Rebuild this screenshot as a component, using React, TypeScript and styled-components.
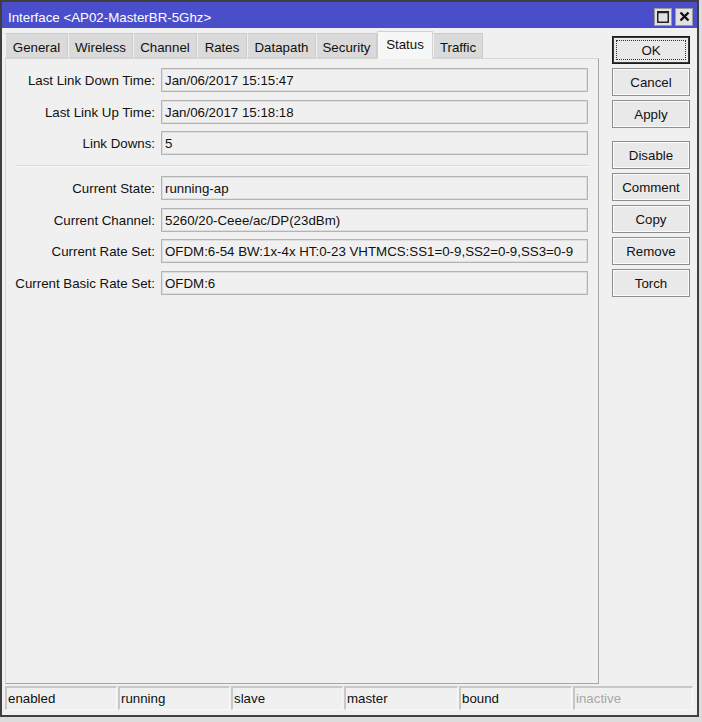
import React from "react";
import styled, { createGlobalStyle } from "styled-components";

const Global = createGlobalStyle`
  html, body { margin: 0; padding: 0; }
  body {
    background: #dcdcdc;
    font-family: "Liberation Sans", Arial, sans-serif;
    font-size: 13.3px;
    color: #111;
  }
`;

const Window = styled.div`
  box-sizing: border-box;
  width: 699px;
  height: 717px;
  border: 2px solid #3f3f3f;
  background: #f0f0f0;
  display: flex;
  flex-direction: column;
`;

const TitleBar = styled.div`
  height: 26px;
  background: #4b4ecb;
  display: flex;
  align-items: center;
  padding: 0 4px 0 6px;
  color: #fff;
`;

const Title = styled.div`
  flex: 1;
  font-size: 13.3px;
  padding-top: 4px;
`;

const TitleButtons = styled.div`
  display: flex;
  gap: 3px;
  padding-top: 3px;
`;

const TitleButton = styled.div`
  width: 18px;
  height: 18px;
  box-sizing: border-box;
  background: #e2e2e2;
  border: 1px solid #9a9a9a;
  display: flex;
  align-items: center;
  justify-content: center;
`;

const Body = styled.div`
  flex: 1;
  display: flex;
  padding: 3px 6px 0 3px;
  gap: 13px;
  min-height: 0;
`;

const MainColumn = styled.div`
  width: 594px;
  display: flex;
  flex-direction: column;
`;

const TabRow = styled.div`
  display: flex;
  align-items: flex-end;
  height: 27px;
  position: relative;
  z-index: 1;
`;

const Tab = styled.div<{ $active?: boolean; $w: number }>`
  box-sizing: border-box;
  width: ${(p) => p.$w}px;
  height: ${(p) => (p.$active ? 28 : 25)}px;
  margin-bottom: ${(p) => (p.$active ? -1 : 0)}px;
  background: ${(p) => (p.$active ? "#f7f7f7" : "#dadada")};
  border: 1px solid ${(p) => (p.$active ? "#d2d2d2" : "#cbcbcb")};
  border-bottom: ${(p) => (p.$active ? "none" : "1px solid #d2d2d2")};
  border-left-color: ${(p) => (p.$active ? "#d2d2d2" : "#f2f2f2")};
  display: flex;
  align-items: ${(p) => (p.$active ? "flex-start" : "center")};
  padding-top: ${(p) => (p.$active ? 5 : 3)}px;
  justify-content: center;
  font-size: 13.3px;
  color: #111;
`;

const Panel = styled.div`
  flex: 1;
  box-sizing: border-box;
  background: #f0f0f0;
  border: 1px solid #d6d6d6;
  border-right-color: #a6a6a6;
  border-bottom-color: #a6a6a6;
  padding: 9px 0 0 8px;
`;

const FieldGrid = styled.div`
  display: grid;
  grid-template-columns: 141px 427px;
  column-gap: 6px;
  row-gap: 7.5px;
  align-items: center;
`;

const Label = styled.div`
  text-align: right;
  white-space: nowrap;
  font-size: 13.3px;
  color: #111;
  padding-top: 1px;
`;

const Field = styled.div`
  box-sizing: border-box;
  height: 24px;
  border: 1px solid #b4b4b4;
  box-shadow: inset 0 0 0 1px #dedede;
  background: #f0f0f0;
  display: flex;
  align-items: center;
  padding: 1px 0 0 3px;
  white-space: nowrap;
  overflow: hidden;
  font-size: 13.3px;
  color: #111;
`;

const Separator = styled.div`
  grid-column: 1 / span 2;
  height: 1px;
  background: #d9d9d9;
  border-bottom: 1px solid #fafafa;
  margin: 2px 0 2px 1px;
`;

const SideColumn = styled.div`
  width: 78px;
  margin-top: 5px;
  display: flex;
  flex-direction: column;
  gap: 4px;
`;

const Button = styled.div<{ $default?: boolean; $gapBefore?: boolean }>`
  box-sizing: border-box;
  height: 28px;
  margin-top: ${(p) => (p.$gapBefore ? 9 : 0)}px;
  background: #e9e9e9;
  border: 1px solid ${(p) => (p.$default ? "#1a1a1a" : "#8e8e8e")};
  box-shadow: inset 0 0 0 1px ${(p) => (p.$default ? "#3a3a3a" : "#fbfbfb")};
  display: flex;
  align-items: center;
  justify-content: center;
  position: relative;
  font-size: 13.3px;
  color: #111;
  &::after {
    content: "";
    display: ${(p) => (p.$default ? "block" : "none")};
    position: absolute;
    inset: 3px;
    border: 1px dotted #333;
  }
`;

const StatusBar = styled.div`
  display: grid;
  grid-template-columns: 112px 112px 112px 114px 113px 1fr;
  column-gap: 1px;
  padding: 2px 4px 5px 3px;
`;

const StatusCell = styled.div<{ $dim?: boolean }>`
  box-sizing: border-box;
  height: 24px;
  border-top: 2px solid #c8c8c8;
  border-left: 2px solid #c8c8c8;
  border-right: 1px solid #f8f8f8;
  border-bottom: 1px solid #f8f8f8;
  display: flex;
  align-items: center;
  padding-left: 1px;
  font-size: 13.3px;
  color: ${(p) => (p.$dim ? "#a8a8a8" : "#111")};
`;

const tabs: [string, number][] = [
  ["General", 63],
  ["Wireless", 65],
  ["Channel", 64],
  ["Rates", 50],
  ["Datapath", 69],
  ["Security", 61],
  ["Status", 56],
  ["Traffic", 50],
];

const rowsA: [string, string][] = [
  ["Last Link Down Time:", "Jan/06/2017 15:15:47"],
  ["Last Link Up Time:", "Jan/06/2017 15:18:18"],
  ["Link Downs:", "5"],
];

const rowsB: [string, string][] = [
  ["Current State:", "running-ap"],
  ["Current Channel:", "5260/20-Ceee/ac/DP(23dBm)"],
  ["Current Rate Set:", "OFDM:6-54 BW:1x-4x HT:0-23 VHTMCS:SS1=0-9,SS2=0-9,SS3=0-9"],
  ["Current Basic Rate Set:", "OFDM:6"],
];

const buttons: [string, boolean?, boolean?][] = [
  ["OK", true],
  ["Cancel"],
  ["Apply"],
  ["Disable", false, true],
  ["Comment"],
  ["Copy"],
  ["Remove"],
  ["Torch"],
];

const status: [string, boolean?][] = [
  ["enabled"],
  ["running"],
  ["slave"],
  ["master"],
  ["bound"],
  ["inactive", true],
];

export default function App() {
  return (
    <>
      <Global />
      <Window>
        <TitleBar>
          <Title>Interface &lt;AP02-MasterBR-5Ghz&gt;</Title>
          <TitleButtons>
            <TitleButton>
              <svg width="12" height="12" viewBox="0 0 12 12">
                <rect x="0.75" y="0.75" width="10.5" height="10.5" fill="none" stroke="#222" strokeWidth="1.5" />
                <line x1="0" y1="1.5" x2="12" y2="1.5" stroke="#222" strokeWidth="1.5" />
              </svg>
            </TitleButton>
            <TitleButton>
              <svg width="11" height="11" viewBox="0 0 11 11">
                <path d="M1.5 1.5 L9.5 9.5 M9.5 1.5 L1.5 9.5" stroke="#111" strokeWidth="2.4" />
              </svg>
            </TitleButton>
          </TitleButtons>
        </TitleBar>
        <Body>
          <MainColumn>
            <TabRow>
              {tabs.map(([t, w]) => (
                <Tab key={t} $w={w} $active={t === "Status"}>
                  {t}
                </Tab>
              ))}
            </TabRow>
            <Panel>
              <FieldGrid>
                {rowsA.map(([l, v]) => (
                  <React.Fragment key={l}>
                    <Label>{l}</Label>
                    <Field>{v}</Field>
                  </React.Fragment>
                ))}
                <Separator />
                {rowsB.map(([l, v]) => (
                  <React.Fragment key={l}>
                    <Label>{l}</Label>
                    <Field>{v}</Field>
                  </React.Fragment>
                ))}
              </FieldGrid>
            </Panel>
          </MainColumn>
          <SideColumn>
            {buttons.map(([b, d, g]) => (
              <Button key={b} $default={d} $gapBefore={g}>
                {b}
              </Button>
            ))}
          </SideColumn>
        </Body>
        <StatusBar>
          {status.map(([s, dim]) => (
            <StatusCell key={s} $dim={dim}>
              {s}
            </StatusCell>
          ))}
        </StatusBar>
      </Window>
    </>
  );
}
